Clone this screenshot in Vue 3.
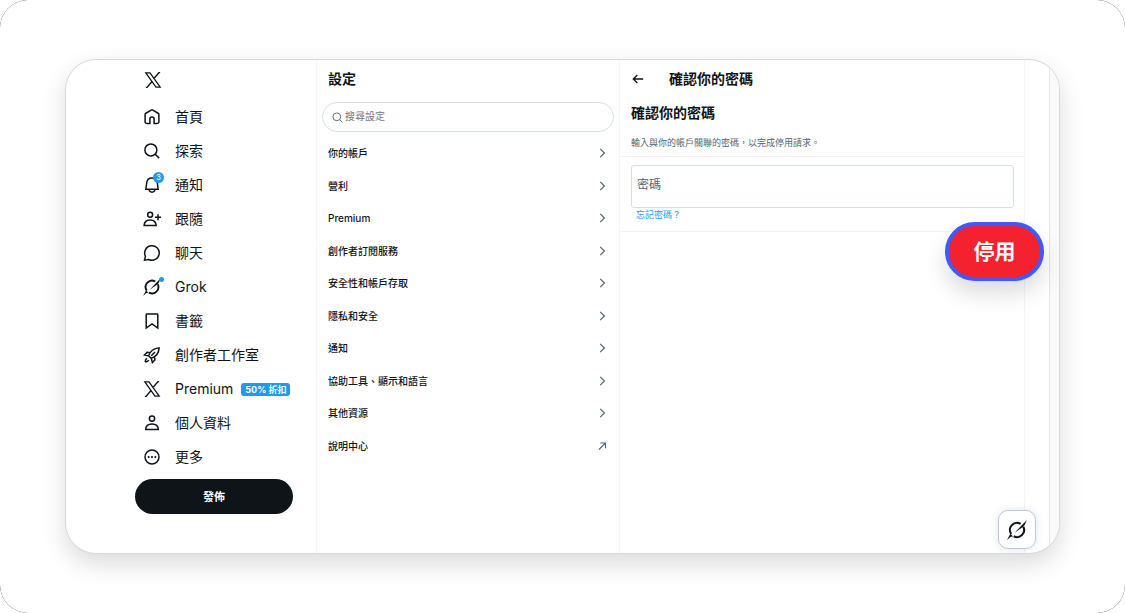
<script setup>
const nav = [
  { icon: 'home', label: '首頁' },
  { icon: 'search', label: '探索' },
  { icon: 'bell', label: '通知', count: 3 },
  { icon: 'follow', label: '跟隨' },
  { icon: 'chat', label: '聊天' },
  { icon: 'grok', label: 'Grok', dot: true },
  { icon: 'bookmark', label: '書籤' },
  { icon: 'rocket', label: '創作者工作室' },
  { icon: 'x', label: 'Premium', tag: '50% 折扣' },
  { icon: 'person', label: '個人資料' },
  { icon: 'more', label: '更多' },
]

const settings = [
  { label: '你的帳戶' },
  { label: '營利' },
  { label: 'Premium' },
  { label: '創作者訂閱服務' },
  { label: '安全性和帳戶存取' },
  { label: '隱私和安全' },
  { label: '通知' },
  { label: '協助工具、顯示和語言' },
  { label: '其他資源' },
  { label: '說明中心', external: true },
]

const grokRing = 'M5 16.800A8.500 8.500 0 0 1 16.400 4.700M19.600 8.200A8.500 8.500 0 0 1 8 19.500'
const grokBlade = 'M24 0 20.800 6.500 19 8.500 9 15.500 18.300 5.800zM0 24 4 16.600 7.400 19.800 4.500 20z'
const xPath = 'M2.400 2.500H8L21.600 21.500H16zM21.500 2.300H19.800L13.300 10M2.500 21.700H4.200L10.700 14'
</script>

<template>
  <div class="frame">
    <div class="stage">
      <div class="card">
        <header class="sidebar">
          <a class="logo" href="#" aria-label="X">
            <svg class="icon" viewBox="0 0 24 24"><path class="thin" :d="xPath" /></svg>
          </a>
          <nav class="nav">
            <a v-for="item in nav" :key="item.label" class="nav-item" href="#">
              <span class="icon-box">
                <svg v-if="item.icon === 'home'" class="icon" viewBox="0 0 24 24">
                  <path d="M9.200 20.800H5.400a2.600 2.600 0 0 1-2.600-2.600V8.900c0-.8.4-1.500 1.100-1.900l7-4.200c.7-.4 1.500-.4 2.200 0l7 4.200c.7.4 1.100 1.100 1.100 1.900v9.300a2.600 2.600 0 0 1-2.600 2.600h-3.800v-6a2.800 2.800 0 0 0-5.600 0z" />
                </svg>
                <svg v-else-if="item.icon === 'search'" class="icon" viewBox="0 0 24 24">
                  <circle cx="10.500" cy="10.500" r="8" />
                  <path d="M16.300 16.300 21.500 21.500" />
                </svg>
                <svg v-else-if="item.icon === 'bell'" class="icon" viewBox="0 0 24 24">
                  <path d="M12 2.500C8.400 2.500 5.400 5.100 5 8.700L3.800 17.500h16.400L19 8.700C18.600 5.100 15.600 2.500 12 2.500zM8 18c.3 2.100 2 3.500 4 3.500s3.700-1.400 4-3.500" />
                </svg>
                <svg v-else-if="item.icon === 'follow'" class="icon" viewBox="0 0 24 24">
                  <circle cx="9.500" cy="6.200" r="3.300" />
                  <path d="M1.500 20.500c.2-4.300 3.400-7.200 8-7.200s7.800 2.900 8 7.200zM20 5.500v8M16 9.500h8" />
                </svg>
                <svg v-else-if="item.icon === 'chat'" class="icon" viewBox="0 0 24 24">
                  <path d="M2 21.500l1.200-5.300A9.700 9.700 0 1 1 7.700 20.700z" />
                </svg>
                <svg v-else-if="item.icon === 'grok'" class="icon" viewBox="0 0 24 24">
                  <path class="ring" :d="grokRing" />
                  <path class="fill" :d="grokBlade" />
                </svg>
                <svg v-else-if="item.icon === 'bookmark'" class="icon" viewBox="0 0 24 24">
                  <path d="M5 2.800h14c.4 0 .7.3.7.7v18L12 16l-7.700 5.500v-18c0-.4.3-.7.7-.7z" />
                </svg>
                <svg v-else-if="item.icon === 'rocket'" class="icon" viewBox="0 0 24 24">
                  <path d="M7.500 13C9.500 7 14 3.200 21.500 2.500 21 10 17 14.500 11 16.500zM9.500 9 5.500 8.500 2 12l5.500 1M11 16.500l1.500 5.500 3.500-3.500-1-4M11 13l5-5M3 21.200c-.1-2.300.6-3.700 2.300-4.700M3 21.200c2.300.1 3.700-.6 4.700-2.300" />
                </svg>
                <svg v-else-if="item.icon === 'x'" class="icon" viewBox="0 0 24 24">
                  <path class="thin" :d="xPath" />
                </svg>
                <svg v-else-if="item.icon === 'person'" class="icon" viewBox="0 0 24 24">
                  <circle cx="12" cy="6" r="3.500" />
                  <path d="M3.500 20.800c.2-4.600 3.500-7.600 8.500-7.600s8.300 3 8.500 7.600z" />
                </svg>
                <svg v-else class="icon" viewBox="0 0 24 24">
                  <circle cx="12" cy="12" r="9.300" />
                  <path class="fill" d="M6.100 12a1.400 1.400 0 1 0 2.800 0 1.400 1.400 0 1 0-2.800 0zM10.600 12a1.400 1.400 0 1 0 2.800 0 1.400 1.400 0 1 0-2.800 0zM15.100 12a1.400 1.400 0 1 0 2.800 0 1.400 1.400 0 1 0-2.800 0z" />
                </svg>
                <span v-if="item.count" class="count">{{ item.count }}</span>
                <span v-if="item.dot" class="dot"></span>
              </span>
              <span class="label">{{ item.label }}</span>
              <span v-if="item.tag" class="tag">{{ item.tag }}</span>
            </a>
          </nav>
          <button class="post" type="button">發佈</button>
        </header>

        <section class="settings">
          <h2 class="title">設定</h2>
          <label class="search">
            <svg class="search-icon" viewBox="0 0 24 24">
              <circle cx="10.500" cy="10.500" r="8.500" />
              <path d="M16.500 16.500 22.500 22.500" />
            </svg>
            <input type="search" placeholder="搜尋設定" aria-label="搜尋設定" />
          </label>
          <nav class="list">
            <a v-for="row in settings" :key="row.label" class="row" href="#">
              <span>{{ row.label }}</span>
              <svg class="row-icon" viewBox="0 0 10 10">
                <path v-if="row.external" d="M2 8.500 8.300 2.200M3.300 2H8.500V7.200" />
                <path v-else d="M3.200 .8 7.400 5 3.200 9.200" />
              </svg>
            </a>
          </nav>
        </section>

        <main class="detail">
          <div class="bar">
            <button class="back" type="button" aria-label="返回">
              <svg viewBox="0 0 12 12"><path d="M11.200 6H1.500M5.300 2 1.300 6l4 4" /></svg>
            </button>
            <h2 class="title">確認你的密碼</h2>
          </div>
          <div class="intro">
            <h3 class="title">確認你的密碼</h3>
            <p>輸入與你的帳戶關聯的密碼，以完成停用請求。</p>
          </div>
          <div class="form">
            <input type="password" placeholder="密碼" aria-label="密碼" />
            <a class="forgot" href="#">忘記密碼？</a>
          </div>
        </main>

        <div class="margin"></div>
        <div class="track"></div>

        <button class="grok-button" type="button" aria-label="Grok">
          <svg class="icon" viewBox="0 0 24 24">
            <path class="ring" :d="grokRing" />
            <path class="fill" :d="grokBlade" />
          </svg>
        </button>
        <button class="deactivate" type="button">停用</button>
      </div>
    </div>
  </div>
</template>

<style>
body {
  margin: 0;
  background: #fff;
}
</style>

<style scoped>
* {
  box-sizing: border-box;
}
.frame {
  border-radius: 28px;
  background: #000;
  color: #0f1419;
  font-family: Inter, "Noto Sans CJK TC", sans-serif;
}
.stage {
  display: flex;
  min-height: 100vh;
  padding: 59px 65px;
  border-radius: 28px;
  background: #fff;
}
.card {
  position: relative;
  flex: 1;
  display: grid;
  grid-template-columns: 251fr 303fr 405fr 24fr 10px;
  overflow: hidden;
  border: 1px solid #d8d8d8;
  border-radius: 31px;
  background: #fff;
  box-shadow: 0 10px 24px rgba(0, 0, 0, 0.14);
}
a {
  color: inherit;
  text-decoration: none;
}
button,
input {
  font-family: inherit;
}
.title {
  margin: 0;
  font-size: 14px;
  line-height: 18px;
  font-weight: 700;
}

.sidebar {
  padding: 9px 23px 0 69px;
  border-right: 1px solid #f3f5f6;
}
.logo {
  display: flex;
  padding: 2px 9px 0;
}
.icon {
  display: block;
  width: 18px;
  height: 18px;
  fill: none;
  stroke: #0f1419;
  stroke-width: 2;
}
.icon .thin {
  stroke-width: 1.7;
}
.icon .ring {
  stroke-width: 2.5;
}
.icon .fill {
  fill: #0f1419;
  stroke: none;
}
.nav {
  padding-top: 11px;
}
.nav-item {
  display: flex;
  align-items: center;
  height: 34px;
  padding-left: 8px;
  font-size: 14px;
  white-space: nowrap;
}
.icon-box {
  position: relative;
  margin-right: 14px;
}
.label {
  padding-bottom: 2px;
}
.count {
  position: absolute;
  top: -4px;
  right: -3px;
  width: 11px;
  height: 11px;
  border-radius: 50%;
  background: #1d9bf0;
  color: #fff;
  font-size: 8px;
  line-height: 11px;
  text-align: center;
}
.dot {
  position: absolute;
  top: -1px;
  right: -3px;
  width: 5px;
  height: 5px;
  border-radius: 50%;
  background: #1d9bf0;
}
.tag {
  margin-left: 8px;
  padding: 0 4px;
  border-radius: 3px;
  background: #1d9bf0;
  color: #fff;
  font-size: 9px;
  line-height: 13px;
  font-weight: 700;
}
.post {
  width: 100%;
  height: 35px;
  margin-top: 5px;
  padding-bottom: 3px;
  border: 0;
  border-radius: 18px;
  background: #0f1419;
  color: #fff;
  font-size: 11px;
  font-weight: 700;
}

.settings {
  padding: 10px 5px 0;
  border-right: 1px solid #f3f5f6;
}
.settings .title {
  padding-left: 6px;
}
.search {
  display: flex;
  align-items: center;
  gap: 2px;
  height: 30px;
  margin-top: 14px;
  padding: 0 9px;
  border: 1px solid #d7dfe4;
  border-radius: 15px;
}
.search-icon {
  flex: none;
  width: 11px;
  height: 11px;
  fill: none;
  stroke: #536471;
  stroke-width: 2;
}
.search input {
  flex: 1;
  min-width: 0;
  padding: 0 0 2px;
  border: 0;
  outline: 0;
  background: none;
  font-size: 10px;
}
.search input::placeholder {
  color: #757575;
  opacity: 1;
}
.list {
  display: grid;
  grid-auto-rows: 1fr;
  height: 325px;
  margin-top: 5px;
}
.row {
  display: flex;
  align-items: center;
  justify-content: space-between;
  padding: 0 7px 0 6px;
  font-size: 10px;
  font-weight: 500;
}
.row span {
  padding-bottom: 1px;
}
.row-icon {
  width: 10px;
  height: 10px;
  fill: none;
  stroke: #536471;
  stroke-width: 1.2;
}

.detail {
  border-right: 1px solid #f3f5f6;
}
.bar {
  display: flex;
  align-items: center;
  gap: 25px;
  padding: 10px 12px 0;
}
.back {
  display: flex;
  padding: 0;
  border: 0;
  background: none;
}
.back svg {
  width: 12px;
  height: 12px;
  fill: none;
  stroke: #0f1419;
  stroke-width: 1.3;
}
.intro {
  padding: 16px 11px 6px;
  border-bottom: 1px solid #eff3f4;
}
.intro p {
  margin: 14px 0 0;
  color: #536471;
  font-size: 9px;
  line-height: 14px;
}
.form {
  display: flex;
  flex-direction: column;
  align-items: flex-start;
  padding: 8px 10px 9px 11px;
  border-bottom: 1px solid #eff3f4;
}
.form input {
  width: 100%;
  height: 43px;
  padding: 0 5px 4px;
  border: 1px solid #d7dfe3;
  border-radius: 3px;
  outline: 0;
  font-size: 12px;
}
.form input::placeholder {
  color: #536471;
  opacity: 1;
}
.forgot {
  margin: 0 5px;
  color: #1d9bf0;
  font-size: 9px;
  line-height: 14px;
}
.track {
  border-left: 1px solid #e6e6e6;
  background: #fafafa;
}

.grok-button {
  position: absolute;
  right: 23px;
  bottom: 4px;
  display: grid;
  place-items: center;
  width: 38px;
  height: 39px;
  padding: 0;
  border: 1px solid #b9cbda;
  border-radius: 10px;
  background: #fff;
  box-shadow: 0 0 8px rgba(101, 119, 134, 0.2);
}
.grok-button .icon {
  width: 20px;
  height: 20px;
}
.deactivate {
  position: absolute;
  top: 162px;
  right: 15px;
  width: 99px;
  height: 59px;
  padding: 0 0 4px;
  border: 4px solid #3d5afe;
  border-radius: 30px;
  background: #f4212e;
  box-shadow: 0 12px 22px rgba(0, 0, 0, 0.14);
  color: #fff;
  font-size: 21px;
  font-weight: 700;
}
</style>
